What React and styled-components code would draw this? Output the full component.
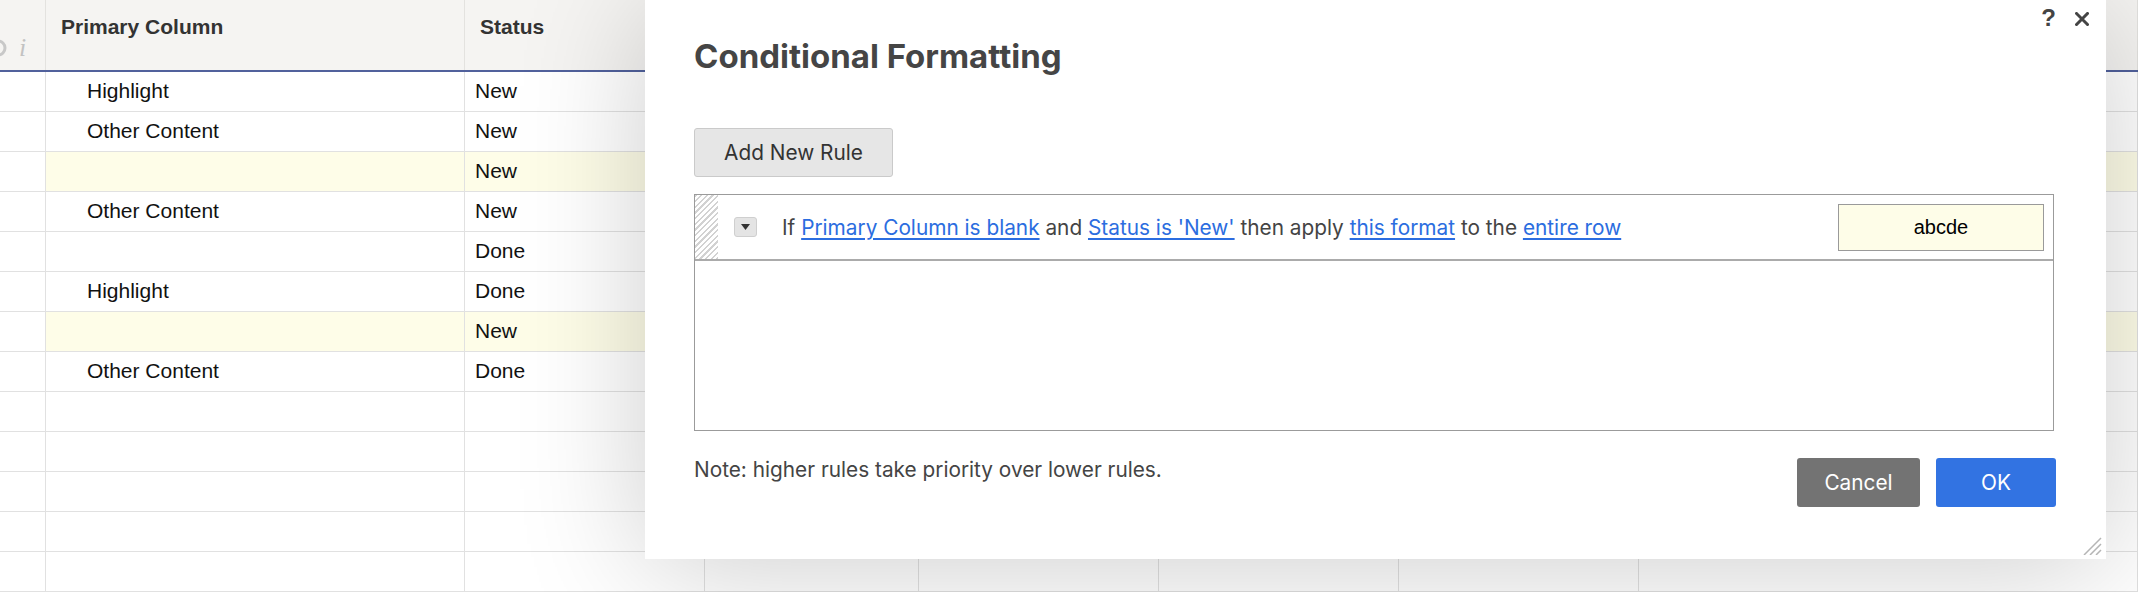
import React from "react";
import styled, { createGlobalStyle } from "styled-components";

const GlobalStyle = createGlobalStyle`
  html, body {
    margin: 0;
    padding: 0;
    background: #fff;
  }
  body {
    width: 2138px;
    height: 592px;
    overflow: hidden;
    font-family: "Liberation Sans", Arial, sans-serif;
  }
  * {
    box-sizing: border-box;
  }
`;

const COLS = "46px 419px 240px 214px 240px 240px 240px 1fr";
const UI_FONT = `Inter, Lato, "Open Sans", sans-serif`;

const rows = [
  { primary: "Highlight", status: "New" },
  { primary: "Other Content", status: "New" },
  { primary: "", status: "New", highlight: true },
  { primary: "Other Content", status: "New" },
  { primary: "", status: "Done" },
  { primary: "Highlight", status: "Done" },
  { primary: "", status: "New", highlight: true },
  { primary: "Other Content", status: "Done" },
  {},
  {},
  {},
  {},
  {},
];

const App = () => {
  return (
    <Page>
      <GlobalStyle />
      <Sheet>
        <HeaderRow>
          <HeaderCell className="numbers">
            <svg width="12" height="18" viewBox="0 0 12 18">
              <ellipse cx="2" cy="9" rx="7" ry="7" fill="none" stroke="#c8c8c8" strokeWidth="3" />
            </svg>
            <span className="info">i</span>
          </HeaderCell>
          <HeaderCell>Primary Column</HeaderCell>
          <HeaderCell>Status</HeaderCell>
          <HeaderCell />
          <HeaderCell />
          <HeaderCell />
          <HeaderCell />
          <HeaderCell />
        </HeaderRow>
        {rows.map((row, i) => (
          <Row key={i}>
            <Cell />
            <Cell $highlight={row.highlight} $pad={41}>
              {row.primary}
            </Cell>
            <Cell $highlight={row.highlight} $pad={10}>
              {row.status}
            </Cell>
            <Cell $highlight={row.highlight} />
            <Cell $highlight={row.highlight} />
            <Cell $highlight={row.highlight} />
            <Cell $highlight={row.highlight} />
            <Cell $highlight={row.highlight} />
          </Row>
        ))}
      </Sheet>

      <Dialog>
        <DialogHeader>
          <Title>Conditional Formatting</Title>
          <Controls>
            <span className="help">?</span>
            <svg width="14" height="14" viewBox="0 0 14 14">
              <path d="M1.5 1.5 L12.5 12.5 M12.5 1.5 L1.5 12.5" stroke="#444" strokeWidth="3" strokeLinecap="square" />
            </svg>
          </Controls>
        </DialogHeader>
        <DialogBody>
          <AddButton>Add New Rule</AddButton>
          <RulesBox>
            <RuleRow>
              <Handle />
              <Dropdown>
                <svg width="9" height="6" viewBox="0 0 9 6">
                  <path d="M0 0 H9 L4.5 6 Z" fill="#333" />
                </svg>
              </Dropdown>
              <RuleText>
                If <a>Primary Column is blank</a> and <a>Status is 'New'</a> then apply{" "}
                <a>this format</a> to the <a>entire row</a>
              </RuleText>
              <Swatch>abcde</Swatch>
            </RuleRow>
          </RulesBox>
          <Footer>
            <Note>Note: higher rules take priority over lower rules.</Note>
            <Buttons>
              <ActionButton $kind="cancel">Cancel</ActionButton>
              <ActionButton $kind="ok">OK</ActionButton>
            </Buttons>
          </Footer>
        </DialogBody>
        <Grip>
          <svg width="20" height="19" viewBox="0 0 20 19">
            <path d="M19 2 L2 19 M19 8 L8 19 M19 14 L14 19" stroke="#b5b5b5" strokeWidth="1.5" />
          </svg>
        </Grip>
      </Dialog>
    </Page>
  );
};

const Page = styled.div`
  position: relative;
  width: 2138px;
  height: 592px;
  overflow: hidden;
  background: #fff;
`;

const Sheet = styled.div`
  display: flex;
  flex-direction: column;
  width: 100%;
`;

const HeaderRow = styled.div`
  display: grid;
  grid-template-columns: ${COLS};
  height: 72px;
  background: #f5f4f2;
  border-bottom: 2px solid #51619c;
`;

const HeaderCell = styled.div`
  border-right: 1px solid #e3e2df;
  padding: 15px 15px 0;
  font-weight: 700;
  font-size: 21px;
  line-height: 24px;
  color: #333;
  overflow: hidden;
  white-space: nowrap;

  &.numbers {
    display: flex;
    align-items: center;
    padding: 26px 0 0 0;
    svg {
      margin-left: -4px;
    }
    .info {
      margin-left: 11px;
      font-family: "Liberation Serif", serif;
      font-style: italic;
      font-weight: 400;
      font-size: 26px;
      color: #c2c2c2;
    }
  }
`;

const Row = styled.div`
  display: grid;
  grid-template-columns: ${COLS};
  height: 40px;
  border-bottom: 1px solid #e1e1e1;
`;

const Cell = styled.div`
  border-right: 1px solid #e1e1e1;
  background: ${(p) => (p.$highlight ? "#fefde8" : "transparent")};
  padding-left: ${(p) => p.$pad || 0}px;
  font-size: 21px;
  line-height: 37px;
  color: #111;
  white-space: nowrap;
  overflow: hidden;
`;

const Dialog = styled.div`
  position: absolute;
  left: 645px;
  top: 0;
  width: 1461px;
  height: 559px;
  background: #fff;
  box-shadow: 0 8px 120px rgba(0, 0, 0, 0.2);
  display: flex;
  flex-direction: column;
  font-family: ${UI_FONT};
`;

const DialogHeader = styled.div`
  display: flex;
  justify-content: space-between;
  align-items: flex-start;
  padding: 0 17px 0 49px;
`;

const Title = styled.h1`
  margin: 36px 0 0;
  font-size: 33px;
  line-height: 40px;
  font-weight: 700;
  color: #454545;
`;

const Controls = styled.div`
  display: flex;
  align-items: center;
  gap: 19px;
  margin-top: 4px;

  .help {
    font-family: "Liberation Sans", Arial, sans-serif;
    font-weight: 700;
    font-size: 24px;
    line-height: 28px;
    color: #444;
  }
  svg {
    margin-top: 2px;
  }
`;

const DialogBody = styled.div`
  display: flex;
  flex-direction: column;
  padding: 0 52px 0 49px;
`;

const AddButton = styled.button`
  margin-top: 52px;
  width: 199px;
  height: 49px;
  background: #e6e6e6;
  border: 1px solid #cacaca;
  border-radius: 3px;
  font-family: ${UI_FONT};
  font-size: 20.8px;
  color: #333;
  padding: 0;
`;

const RulesBox = styled.div`
  margin-top: 17px;
  height: 237px;
  border: 1px solid #9b9b9b;
`;

const RuleRow = styled.div`
  display: flex;
  align-items: center;
  height: 66px;
  border-bottom: 2px solid #ababab;
`;

const Handle = styled.div`
  align-self: stretch;
  width: 23px;
  background: repeating-linear-gradient(
    -45deg,
    #d2d2d2 0 1.5px,
    #fff 1.5px 4px
  );
`;

const Dropdown = styled.div`
  margin-left: 16px;
  width: 23px;
  height: 20px;
  display: flex;
  align-items: center;
  justify-content: center;
  background: #e4e4e4;
  border: 1px solid #cfcfcf;
  border-radius: 3px;
`;

const RuleText = styled.div`
  flex: 1;
  margin-left: 25px;
  font-size: 20.8px;
  color: #444;
  white-space: nowrap;

  a {
    color: #2b6de0;
    text-decoration: underline;
    text-underline-offset: 3px;
    cursor: pointer;
  }
`;

const Swatch = styled.div`
  width: 206px;
  height: 47px;
  margin-right: 9px;
  background: #fefde8;
  border: 1px solid #9a9a9a;
  display: flex;
  align-items: center;
  justify-content: center;
  font-family: "Liberation Sans", Arial, sans-serif;
  font-size: 20px;
  color: #000;
`;

const Footer = styled.div`
  display: flex;
  justify-content: space-between;
  align-items: flex-start;
  margin-top: 27px;
`;

const Note = styled.div`
  font-size: 20.8px;
  line-height: 24px;
  color: #444;
`;

const Buttons = styled.div`
  display: flex;
  gap: 16px;
  margin-right: -2px;
`;

const ActionButton = styled.button`
  width: ${(p) => (p.$kind === "ok" ? 120 : 123)}px;
  height: 49px;
  border: none;
  border-radius: 3px;
  background: ${(p) => (p.$kind === "ok" ? "#3273e2" : "#737373")};
  color: #fff;
  font-family: ${UI_FONT};
  font-size: 20.8px;
  padding: 0;
`;

const Grip = styled.div`
  position: absolute;
  right: 4px;
  bottom: 4px;
  line-height: 0;
`;

export default App;
